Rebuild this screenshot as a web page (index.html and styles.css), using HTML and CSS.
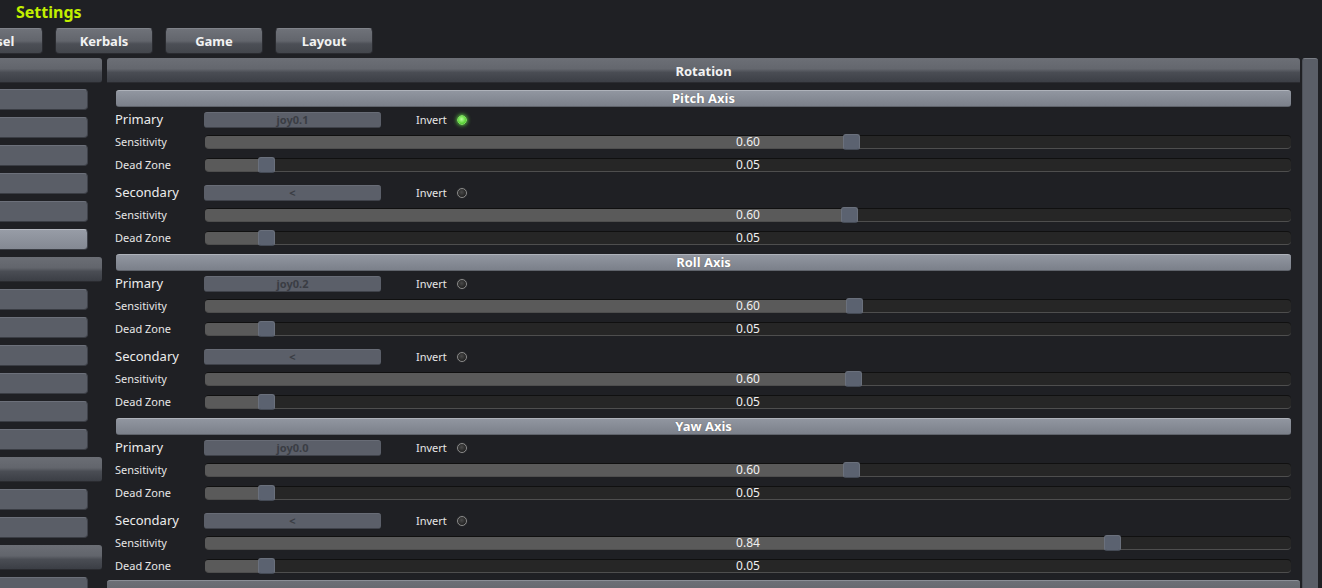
FILE: index.html
```html
<!DOCTYPE html>
<html>
<head>
<meta charset="utf-8">
<link rel="stylesheet" href="styles.css">
</head>
<body>
<div class="title">Settings</div>
<div class="tabs">
  <div class="tab">Vessel</div>
  <div class="tab">Kerbals</div>
  <div class="tab">Game</div>
  <div class="tab">Layout</div>
</div>
<div class="content">
  <div class="sidebar">
    <div class="side-head"></div>
    <div class="side-btn"></div>
    <div class="side-btn"></div>
    <div class="side-btn"></div>
    <div class="side-btn"></div>
    <div class="side-btn"></div>
    <div class="side-btn sel"></div>
    <div class="side-head"></div>
    <div class="side-btn"></div>
    <div class="side-btn"></div>
    <div class="side-btn"></div>
    <div class="side-btn"></div>
    <div class="side-btn"></div>
    <div class="side-btn"></div>
    <div class="side-head"></div>
    <div class="side-btn"></div>
    <div class="side-btn"></div>
    <div class="side-head"></div>
    <div class="side-btn"></div>
  </div>
  <div class="main">
    <div class="main-head">Rotation</div>
    <div class="axes">
      <div class="axis">
        <div class="axis-head">Pitch Axis</div>
        <div class="bind-row"><span class="bind-label">Primary</span><div class="bind-btn">joy0.1</div><span class="invert">Invert</span><span class="radio on"></span></div>
        <div class="slider-row"><span class="s-label">Sensitivity</span><div class="track" style="--v:0.597"><div class="fill"></div><div class="thumb"></div><span class="val">0.60</span></div></div>
        <div class="slider-row dz"><span class="s-label">Dead Zone</span><div class="track" style="--v:0.05"><div class="fill"></div><div class="thumb"></div><span class="val">0.05</span></div></div>
        <div class="bind-row second"><span class="bind-label">Secondary</span><div class="bind-btn">&lt;</div><span class="invert">Invert</span><span class="radio"></span></div>
        <div class="slider-row"><span class="s-label">Sensitivity</span><div class="track" style="--v:0.595"><div class="fill"></div><div class="thumb"></div><span class="val">0.60</span></div></div>
        <div class="slider-row dz"><span class="s-label">Dead Zone</span><div class="track" style="--v:0.05"><div class="fill"></div><div class="thumb"></div><span class="val">0.05</span></div></div>
      </div>
      <div class="axis">
        <div class="axis-head">Roll Axis</div>
        <div class="bind-row"><span class="bind-label">Primary</span><div class="bind-btn">joy0.2</div><span class="invert">Invert</span><span class="radio"></span></div>
        <div class="slider-row"><span class="s-label">Sensitivity</span><div class="track" style="--v:0.6"><div class="fill"></div><div class="thumb"></div><span class="val">0.60</span></div></div>
        <div class="slider-row dz"><span class="s-label">Dead Zone</span><div class="track" style="--v:0.05"><div class="fill"></div><div class="thumb"></div><span class="val">0.05</span></div></div>
        <div class="bind-row second"><span class="bind-label">Secondary</span><div class="bind-btn">&lt;</div><span class="invert">Invert</span><span class="radio"></span></div>
        <div class="slider-row"><span class="s-label">Sensitivity</span><div class="track" style="--v:0.599"><div class="fill"></div><div class="thumb"></div><span class="val">0.60</span></div></div>
        <div class="slider-row dz"><span class="s-label">Dead Zone</span><div class="track" style="--v:0.05"><div class="fill"></div><div class="thumb"></div><span class="val">0.05</span></div></div>
      </div>
      <div class="axis">
        <div class="axis-head">Yaw Axis</div>
        <div class="bind-row"><span class="bind-label">Primary</span><div class="bind-btn">joy0.0</div><span class="invert">Invert</span><span class="radio"></span></div>
        <div class="slider-row"><span class="s-label">Sensitivity</span><div class="track" style="--v:0.597"><div class="fill"></div><div class="thumb"></div><span class="val">0.60</span></div></div>
        <div class="slider-row dz"><span class="s-label">Dead Zone</span><div class="track" style="--v:0.05"><div class="fill"></div><div class="thumb"></div><span class="val">0.05</span></div></div>
        <div class="bind-row second"><span class="bind-label">Secondary</span><div class="bind-btn">&lt;</div><span class="invert">Invert</span><span class="radio"></span></div>
        <div class="slider-row"><span class="s-label">Sensitivity</span><div class="track" style="--v:0.841"><div class="fill"></div><div class="thumb"></div><span class="val">0.84</span></div></div>
        <div class="slider-row dz"><span class="s-label">Dead Zone</span><div class="track" style="--v:0.05"><div class="fill"></div><div class="thumb"></div><span class="val">0.05</span></div></div>
      </div>
    </div>
    <div class="main-head next"></div>
  </div>
  <div class="scrollbar"></div>
</div>
</body>
</html>
```
FILE: styles.css
```css
* { box-sizing: border-box; }
html, body {
  margin: 0;
  padding: 0;
  width: 1322px;
  height: 588px;
  overflow: hidden;
  background: #1f2024;
  font-family: "Noto Sans", "Open Sans", sans-serif;
  color: #e6e6e6;
}
.title {
  height: 28px;
  padding-left: 16px;
  font-size: 16px;
  font-weight: bold;
  line-height: 24px;
  color: #c2ef00;
}
.tabs {
  display: flex;
  gap: 12px;
  margin-left: -55px;
  height: 26px;
}
.tab {
  width: 98px;
  height: 26px;
  border-radius: 4px;
  background: linear-gradient(#6f7279 0%, #62656c 50%, #4c4f56 62%, #43464c 100%);
  border: 1px solid #2a2b30;
  border-top-color: #80838a;
  color: #f2f2f2;
  font-size: 13px;
  font-weight: bold;
  text-align: center;
  line-height: 24px;
}
.content {
  display: flex;
  margin-top: 4px;
}
.sidebar {
  width: 102px;
  flex: none;
  display: flex;
  flex-direction: column;
}
.side-head {
  height: 25px;
  margin-bottom: 7px;
  border-radius: 0 3px 3px 0;
  background: linear-gradient(#6b6e75 0%, #62656c 45%, #4a4d54 60%, #3b3e45 100%);
  border-bottom: 1px solid #2a2b30;
}
.sidebar .side-head:first-child { margin-bottom: 6px; }
.side-btn {
  width: 88px;
  height: 21px;
  margin-bottom: 7px;
  border-radius: 0 4px 4px 0;
  background: #5a5e67;
  border-top: 1px solid #6c707a;
  border-bottom: 1px solid #3a3d44;
  border-right: 1px solid #3f424a;
}
.side-btn.sel {
  background: linear-gradient(#979ca6, #848993);
  border-top-color: #b4b8c0;
}
.main {
  width: 1193px;
  margin-left: 5px;
  flex: none;
  display: flex;
  flex-direction: column;
}
.main-head {
  height: 25px;
  flex: none;
  border-radius: 3px 3px 0 0;
  background: linear-gradient(#6c6f76 0%, #64676e 45%, #4a4d54 60%, #3c3f46 100%);
  border-bottom: 1px solid #2a2b30;
  color: #f2f2f2;
  font-size: 13px;
  font-weight: bold;
  text-align: center;
  line-height: 26px;
}
.main-head.next {
  margin-top: 3px;
  border-top: 1px solid #8a8e96;
}
.axes {
  padding: 7px 9px 0 8px;
}
.axis {
  display: flex;
  flex-direction: column;
}
.axis-head {
  height: 17px;
  margin: 0 0 1px 1px;
  border-radius: 3px;
  background: linear-gradient(#9196a0 0%, #868b95 50%, #7b808a 100%);
  border-top: 1px solid #aeb2ba;
  border-bottom: 1px solid #5f636b;
  color: #ffffff;
  font-size: 13px;
  font-weight: bold;
  text-align: center;
  line-height: 15px;
  text-shadow: 0 0 1px #555;
}
.axis + .axis .axis-head { margin-top: 5px; }
.bind-row {
  height: 23px;
  display: flex;
  align-items: center;
}
.bind-row.second {
  margin-top: 5px;
}
.bind-label {
  width: 89px;
  font-size: 13px;
  color: #ececec;
  margin-bottom: 1px;
}
.bind-btn {
  width: 177px;
  height: 16px;
  border-radius: 3px;
  background: #5b5f69;
  border-bottom: 1px solid #3f424a;
  border-top: 1px solid #686c76;
  color: #3a3d44;
  font-size: 11px;
  font-weight: bold;
  text-align: center;
  line-height: 14px;
}
.invert {
  margin-left: 35px;
  width: 41px;
  font-size: 11px;
  color: #e6e6e6;
}
.radio {
  width: 10px;
  height: 10px;
  border-radius: 50%;
  background: radial-gradient(circle at 45% 40%, #4a4a4a, #222 70%);
  border: 1px solid #8a8a8a;
  box-shadow: 0 0 1px #555;
}
.radio.on {
  background: radial-gradient(circle at 45% 40%, #b8ff9a, #5fd63c 60%, #3a9a25);
  border-color: #7fe060;
  box-shadow: 0 0 4px #6cff4a;
}
.slider-row {
  height: 22px;
  display: flex;
  align-items: center;
}
.slider-row.dz {
  height: 23px;
}
.s-label {
  width: 90px;
  font-size: 11px;
  color: #e6e6e6;
  margin-bottom: 2px;
}
.slider-row.dz .s-label {
  margin-bottom: 0;
}
.track {
  position: relative;
  width: 1086px;
  height: 14px;
  border-radius: 4px;
  background: #262626;
  border-top: 1px solid #101010;
  border-bottom: 1px solid #4e4e4e;
}
.fill {
  position: absolute;
  left: 0;
  top: 0;
  bottom: 0;
  width: calc((100% - 17px) * var(--v) + 8px);
  background: #5a5a5a;
  border-radius: 3px 0 0 3px;
}
.thumb {
  position: absolute;
  top: -2px;
  left: calc((100% - 17px) * var(--v));
  width: 17px;
  height: 16px;
  border-radius: 3px;
  background: #5b6270;
  border: 1px solid #6a707c;
  border-bottom-color: #444a55;
}
.val {
  position: absolute;
  left: 0;
  right: 0;
  top: -1px;
  text-align: center;
  font-size: 12px;
  line-height: 14px;
  color: #f0f0f0;
}
.scrollbar {
  width: 16px;
  margin-left: 2px;
  height: 540px;
  border-radius: 3px 3px 0 0;
  background: #5a5e67;
  border-top: 1px solid #7a7e86;
  border-left: 1px solid #4c5058;
  flex: none;
}
```
